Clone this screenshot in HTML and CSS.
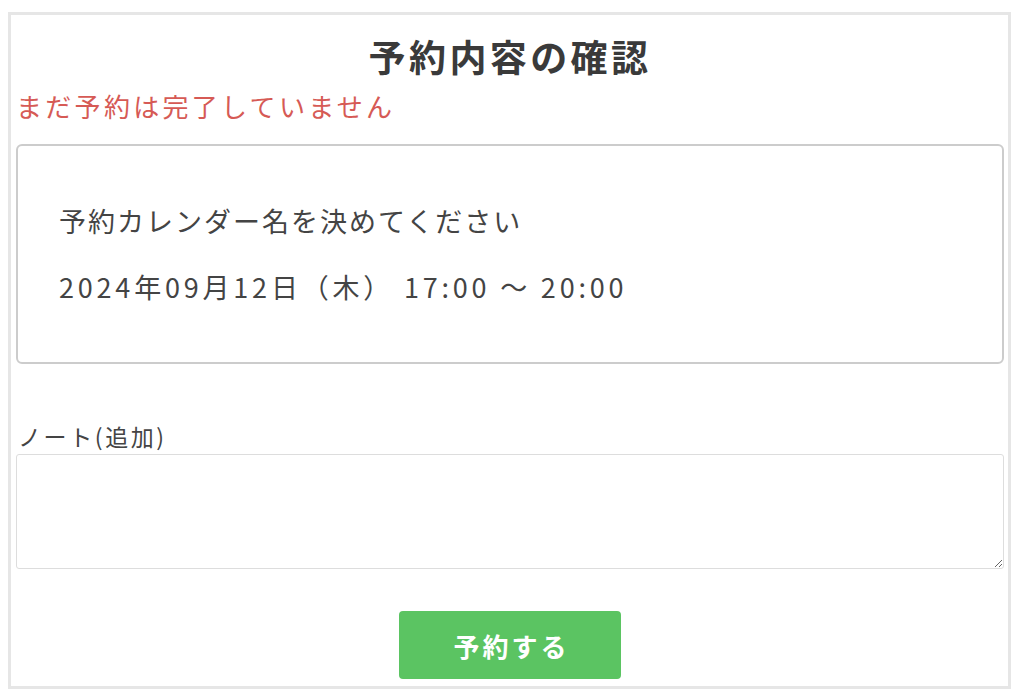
FILE: index.html
```html
<!DOCTYPE html>
<html lang="ja">
<head>
<meta charset="utf-8">
<title>予約内容の確認</title>
<link rel="stylesheet" href="styles.css">
</head>
<body>
<div class="frame">
  <h1 class="title">予約内容の確認</h1>
  <p class="notice">まだ予約は完了していません</p>
  <div class="card">
    <p class="card-line">予約カレンダー名を決めてください</p>
    <p class="card-line second">2024年09月12日（木） 17:00 〜 20:00</p>
  </div>
  <label class="note-label" for="note">ノート(追加)</label>
  <textarea id="note" class="note"></textarea>
  <div class="actions">
    <button class="submit" type="button">予約する</button>
  </div>
</div>
</body>
</html>
```

FILE: styles.css
```css
html, body {
  margin: 0;
  padding: 0;
  background: #ffffff;
}
body {
  font-family: "Noto Sans CJK JP", "Noto Sans", sans-serif;
  color: #444;
}
.frame {
  margin: 12px 13px 0 8px;
  height: 671px;
  border: 3px solid #e6e6e6;
  padding: 0 4px 0 5px;
  display: flex;
  flex-direction: column;
  box-sizing: content-box;
}
.title {
  margin: 19px 0 0;
  font-size: 37px;
  line-height: 44px;
  font-weight: 700;
  letter-spacing: 3.4px;
  text-align: center;
  color: #3a3a3a;
}
.notice {
  margin: 12px 0 0;
  font-size: 26px;
  line-height: 32px;
  letter-spacing: 3.3px;
  color: #d65a55;
}
.card {
  margin-top: 22px;
  height: 216px;
  border: 2px solid #cccccc;
  border-radius: 6px;
  padding: 0 41px;
  display: flex;
  flex-direction: column;
  justify-content: center;
}
.card-line {
  margin: 0;
  font-size: 27px;
  line-height: 32px;
  letter-spacing: 2px;
  color: #444;
}
.card-line.second {
  margin-top: 34px;
  letter-spacing: 3.8px;
}
.note-label {
  margin-top: 57px;
  font-size: 23px;
  line-height: 30px;
  padding-left: 2px;
  letter-spacing: 2.6px;
  color: #444;
}
.note {
  margin-top: 3px;
  height: 115px;
  box-sizing: border-box;
  border: 1px solid #dddddd;
  border-radius: 3px;
  resize: vertical;
  font-family: inherit;
  font-size: 18px;
  padding: 6px;
}
.actions {
  margin-top: 42px;
  display: flex;
  justify-content: center;
}
.submit {
  width: 222px;
  height: 68px;
  border: none;
  border-radius: 4px;
  background: #5bc462;
  color: #ffffff;
  font-family: inherit;
  font-size: 26px;
  font-weight: 700;
  letter-spacing: 3px;
  padding: 0 0 0 3px;
}
```
